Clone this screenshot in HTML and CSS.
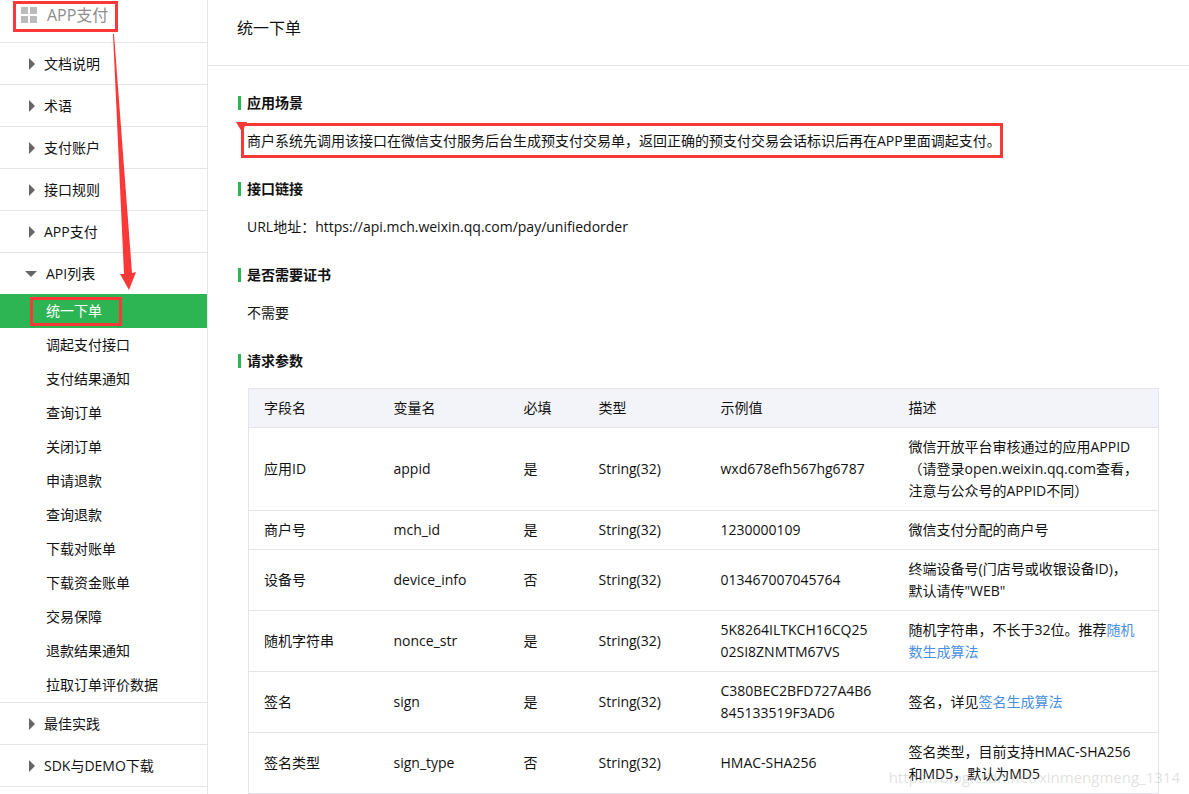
FILE: index.html
```html
<!DOCTYPE html>
<html lang="zh-CN">
<head>
<meta charset="utf-8">
<title>统一下单</title>
<link rel="stylesheet" href="styles.css">
</head>
<body>
<div class="page">
  <nav class="sidebar">
    <div class="brand">
      <svg class="brand-icon" viewBox="0 0 16 16" aria-hidden="true"><path d="M0 0h7v7H0zM9 0h7v7H9zM0 9h7v7H0zM9 9h7v7H9z"/></svg>
      <span>APP支付</span>
    </div>
    <ul class="menu">
      <li class="group"><a class="group-link" href="#">文档说明</a></li>
      <li class="group"><a class="group-link" href="#">术语</a></li>
      <li class="group"><a class="group-link" href="#">支付账户</a></li>
      <li class="group"><a class="group-link" href="#">接口规则</a></li>
      <li class="group"><a class="group-link" href="#">APP支付</a></li>
      <li class="group">
        <a class="group-link open" href="#">API列表</a>
        <ul class="submenu">
          <li><a class="sub-link active" href="#">统一下单</a></li>
          <li><a class="sub-link" href="#">调起支付接口</a></li>
          <li><a class="sub-link" href="#">支付结果通知</a></li>
          <li><a class="sub-link" href="#">查询订单</a></li>
          <li><a class="sub-link" href="#">关闭订单</a></li>
          <li><a class="sub-link" href="#">申请退款</a></li>
          <li><a class="sub-link" href="#">查询退款</a></li>
          <li><a class="sub-link" href="#">下载对账单</a></li>
          <li><a class="sub-link" href="#">下载资金账单</a></li>
          <li><a class="sub-link" href="#">交易保障</a></li>
          <li><a class="sub-link" href="#">退款结果通知</a></li>
          <li><a class="sub-link" href="#">拉取订单评价数据</a></li>
        </ul>
      </li>
      <li class="group"><a class="group-link" href="#">最佳实践</a></li>
      <li class="group last"><a class="group-link" href="#">SDK与DEMO下载</a></li>
    </ul>
  </nav>
  <main class="content">
    <header class="title-bar"><h1 class="title">统一下单</h1></header>
    <div class="sections">
      <section class="section">
        <h2 class="heading">应用场景</h2>
        <p class="text">商户系统先调用该接口在微信支付服务后台生成预支付交易单，返回正确的预支付交易会话标识后再在APP里面调起支付。</p>
      </section>
      <section class="section">
        <h2 class="heading">接口链接</h2>
        <p class="text">URL地址：https://api.mch.weixin.qq.com/pay/unifiedorder</p>
      </section>
      <section class="section">
        <h2 class="heading">是否需要证书</h2>
        <p class="text">不需要</p>
      </section>
      <section class="section">
        <h2 class="heading">请求参数</h2>
        <div class="table-wrap">
          <table class="params">
            <colgroup><col class="col-name"><col class="col-name"><col class="col-required"><col class="col-type"><col class="col-example"><col></colgroup>
            <thead>
              <tr><th>字段名</th><th>变量名</th><th>必填</th><th>类型</th><th>示例值</th><th>描述</th></tr>
            </thead>
            <tbody>
              <tr><td>应用ID</td><td>appid</td><td>是</td><td>String(32)</td><td class="code">wxd678efh567hg6787</td><td>微信开放平台审核通过的应用APPID（请登录open.weixin.qq.com查看，注意与公众号的APPID不同）</td></tr>
              <tr><td>商户号</td><td>mch_id</td><td>是</td><td>String(32)</td><td class="code">1230000109</td><td>微信支付分配的商户号</td></tr>
              <tr><td>设备号</td><td>device_info</td><td>否</td><td>String(32)</td><td class="code">013467007045764</td><td>终端设备号(门店号或收银设备ID)，<br>默认请传"WEB"</td></tr>
              <tr><td>随机字符串</td><td>nonce_str</td><td>是</td><td>String(32)</td><td class="code">5K8264ILTKCH16CQ25<br>02SI8ZNMTM67VS</td><td>随机字符串，不长于32位。推荐<a class="link" href="#">随机数生成算法</a></td></tr>
              <tr><td>签名</td><td>sign</td><td>是</td><td>String(32)</td><td class="code">C380BEC2BFD727A4B6<br>845133519F3AD6</td><td>签名，详见<a class="link" href="#">签名生成算法</a></td></tr>
              <tr><td>签名类型</td><td>sign_type</td><td>否</td><td>String(32)</td><td class="code">HMAC-SHA256</td><td>签名类型，目前支持HMAC-SHA256和MD5，默认为MD5</td></tr>
            </tbody>
          </table>
        </div>
      </section>
    </div>
  </main>
  <svg class="markup" width="1010" height="340" aria-hidden="true">
    <g class="frames">
      <rect x="14.5" y="2.5" width="102" height="28"/>
      <rect x="31.5" y="298.5" width="89" height="26"/>
      <rect x="242.5" y="124.5" width="759" height="32"/>
    </g>
    <path class="arrow" d="M113 34L114 34 132 273 136 272 129 290 120 274 124 274z"/>
    <path class="arrow" d="M236 122H247L242 132z"/>
  </svg>
  <div class="watermark">https://blog.csdn.net/xinmengmeng_1314</div>
</div>
</body>
</html>
```
FILE: styles.css
```css
* {
  box-sizing: border-box;
}

body {
  margin: 0;
  background: #fff;
  color: #111;
  font: 14px/22px "Open Sans", "Noto Sans CJK SC", sans-serif;
}

a {
  color: inherit;
  text-decoration: none;
}

ul {
  margin: 0;
  padding: 0;
  list-style: none;
}

.page {
  position: relative;
  display: flex;
  min-height: 100vh;
}

/* Sidebar */
.sidebar {
  flex: 0 0 208px;
  border-right: 1px solid #e4e4e9;
}

.brand {
  display: flex;
  gap: 10px;
  padding: 4px 0 16px 21px;
  color: #8d8d8d;
  font-size: 16px;
}

.brand-icon {
  width: 16px;
  height: 16px;
  margin-top: 3px;
  fill: #bbb;
}

.group {
  border-top: 1px solid #e4e4e9;
}

.group.last {
  border-bottom: 1px solid #e4e4e9;
}

.group-link {
  display: flex;
  align-items: center;
  gap: 9px;
  height: 41px;
  padding-left: 29px;
}

.group-link::before {
  content: "";
  border: 6px solid transparent;
  border-left-color: #666;
  border-right-width: 0;
}

.group-link.open {
  padding-left: 25px;
}

.group-link.open::before {
  border: 6px solid transparent;
  border-top-color: #666;
  border-bottom-width: 0;
}

.sub-link {
  display: block;
  padding: 6px 0 6px 46px;
}

.sub-link.active {
  background: #2eb553;
  color: #fff;
}

/* Main column */
.content {
  flex: 1;
  min-width: 0;
}

.title-bar {
  padding: 17px 29px 26px;
  border-bottom: 1px solid #e4e4e9;
}

.title {
  margin: 0;
  font-size: 16px;
  font-weight: 400;
}

.sections {
  display: flex;
  flex-direction: column;
  gap: 26px;
  padding: 26px 30px 0;
}

.heading {
  display: flex;
  align-items: center;
  gap: 6px;
  margin: 0 0 16px;
  font-size: 14px;
  font-weight: 700;
}

.heading::before {
  content: "";
  width: 3px;
  height: 14px;
  background: #2eb553;
}

.text {
  margin: 0 0 0 9px;
}

.table-wrap {
  padding-left: 10px;
}

.params {
  width: 100%;
  table-layout: fixed;
  border-collapse: collapse;
  border: 1px solid #e4e4e9;
}

.params th,
.params td {
  padding: 8px 15px;
  border-bottom: 1px solid #e4e4e9;
  font-weight: 400;
  text-align: left;
}

.params th {
  background: #f3f4f9;
}

.params .code {
  word-break: break-all;
}

.col-name {
  width: 130px;
}

.col-required {
  width: 75px;
}

.col-type {
  width: 122px;
}

.col-example {
  width: 188px;
}

.link {
  color: #4a90e2;
}

/* Overlays */
.markup {
  position: absolute;
  top: 0;
  left: 0;
  pointer-events: none;
}

.frames {
  fill: none;
  stroke: #fa3838;
  stroke-width: 3;
}

.arrow {
  fill: #fa3838;
}

.watermark {
  position: absolute;
  right: 9px;
  bottom: 6px;
  color: rgba(150, 150, 150, 0.3);
  font-size: 15px;
  pointer-events: none;
}
```
